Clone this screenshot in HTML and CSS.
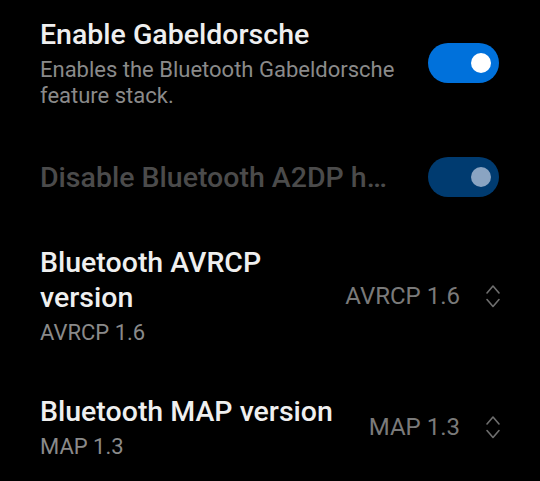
FILE: index.html
```html
<!DOCTYPE html>
<html>
<head>
<meta charset="utf-8">
<link rel="stylesheet" href="styles.css">
</head>
<body>
<div class="list">
  <div class="row">
    <div class="text">
      <div class="title">Enable Gabeldorsche</div>
      <div class="summary">Enables the Bluetooth Gabeldorsche feature stack.</div>
    </div>
    <div class="switch on"><span class="knob"></span></div>
  </div>
  <div class="row">
    <div class="text">
      <div class="title disabled">Disable Bluetooth A2DP h…</div>
    </div>
    <div class="switch on off-enabled"><span class="knob"></span></div>
  </div>
  <div class="row">
    <div class="text">
      <div class="title">Bluetooth AVRCP version</div>
      <div class="summary">AVRCP 1.6</div>
    </div>
    <div class="value">
      <span class="value-text">AVRCP 1.6</span>
      <svg class="chev" width="16" height="24" viewBox="0 0 16 24"><path d="M2 9 L8 2 L14 9 M2 15.5 L8 22.5 L14 15.5" fill="none" stroke="#6e6e6e" stroke-width="1.6" stroke-linecap="round" stroke-linejoin="round"/></svg>
    </div>
  </div>
  <div class="row">
    <div class="text">
      <div class="title">Bluetooth MAP version</div>
      <div class="summary">MAP 1.3</div>
    </div>
    <div class="value">
      <span class="value-text">MAP 1.3</span>
      <svg class="chev" width="16" height="24" viewBox="0 0 16 24"><path d="M2 9 L8 2 L14 9 M2 15.5 L8 22.5 L14 15.5" fill="none" stroke="#6e6e6e" stroke-width="1.6" stroke-linecap="round" stroke-linejoin="round"/></svg>
    </div>
  </div>
</div>
</body>
</html>
```
FILE: styles.css
```css
html, body {
  margin: 0;
  padding: 0;
  background: #000;
  width: 540px;
  height: 481px;
  overflow: hidden;
}
body {
  font-family: Roboto, "Noto Sans", sans-serif;
}
.list {
  margin-top: -7px;
}
.row {
  display: flex;
  align-items: center;
  padding: 24px 41px 24px 40px;
}
.text {
  flex: 1;
  min-width: 0;
  margin-right: 24px;
}
.title {
  font-size: 28.5px;
  line-height: 35px;
  font-weight: 500;
  color: #efefef;
}
.title.disabled {
  color: #4b4b4b;
  white-space: nowrap;
  overflow: hidden;
}
.summary {
  font-size: 22px;
  line-height: 26px;
  color: #8a8a8a;
  margin-top: 5px;
}
.switch {
  width: 71px;
  height: 40px;
  border-radius: 20px;
  background: #0071db;
  display: flex;
  align-items: center;
  justify-content: flex-end;
  padding-right: 8px;
  box-sizing: border-box;
  flex-shrink: 0;
}
.knob {
  width: 20px;
  height: 20px;
  border-radius: 50%;
  background: #fff;
}
.switch.off-enabled {
  background: #003b70;
}
.switch.off-enabled .knob {
  background: #8aa4c2;
}
.value {
  display: flex;
  align-items: center;
  flex-shrink: 0;
  margin-right: -2px;
}
.value-text {
  font-size: 24px;
  color: #7a7a7a;
}
.chev {
  margin-left: 25px;
}
```
